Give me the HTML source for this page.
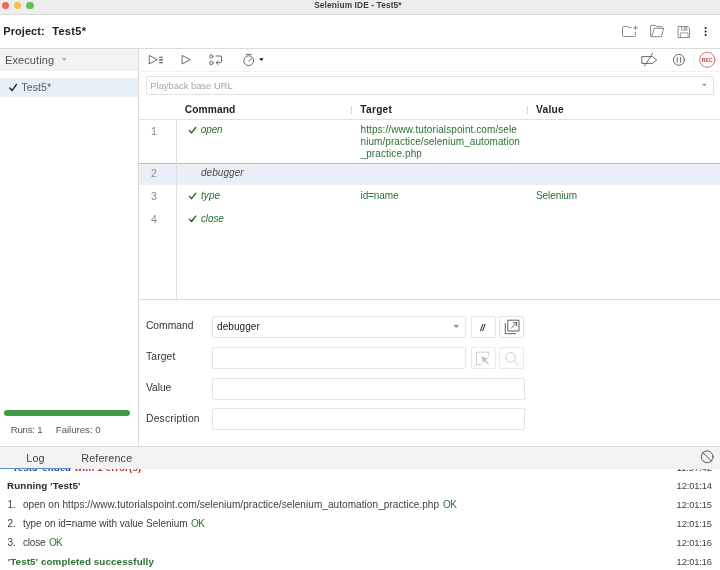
<!DOCTYPE html>
<html>
<head>
<meta charset="utf-8">
<title>Selenium IDE - Test5*</title>
<style>
*{box-sizing:border-box;margin:0;padding:0}
html,body{width:720px;height:570px;overflow:hidden;background:#fff;font-family:"Liberation Sans",sans-serif;color:#333}
.a{position:absolute}
.t{position:absolute;white-space:pre;line-height:1}
#titlebar{left:0;top:0;width:720px;height:15px;background:#eeeded;border-bottom:1px solid #dcdbdb}
.tl{position:absolute;top:1.8px;width:7.5px;height:7.5px;border-radius:50%}
#header{left:0;top:15px;width:720px;height:34px;background:#fff;border-bottom:1px solid #dcdcdc}
#left{left:0;top:49px;width:139px;height:397px;border-right:1px solid #dcdcdc;background:#fff}
#lefthead{left:0;top:49px;width:138px;height:22px;background:#f3f3f3}
#testrow{left:0;top:77.5px;width:138px;height:19.2px;background:#e7eff6}
#toolbar{left:139px;top:49px;width:581px;height:23px;border-bottom:1px solid #f0f0f0;background:#fff}
#url{left:145.7px;top:76.3px;width:568.5px;height:18.6px;border:1px solid #e0e0e0;border-radius:2px;background:#fff}
#thborder{left:139px;top:119px;width:581px;height:1px;background:#e0e0e0}
#numborder{left:176px;top:120px;width:1px;height:179px;background:#e0e0e0}
.sep{top:105.5px;width:1px;height:8px;background:#d8d8d8}
#selrow{left:139px;top:163px;width:581px;height:22px;background:#e9eff6}
#selline{left:139px;top:162.6px;width:581px;height:1px;background:#b3bfea}
#editor{left:139px;top:299px;width:581px;height:147px;border-top:1px solid #dcdcdc;background:#fff}
.inp{border:1px solid #e3e3e3;border-radius:2px;background:#fff;height:22px;left:212.3px}
.btn{border:1px solid #e3e3e3;border-radius:2px;background:#fff;height:22px;width:25px}
#progress{left:3.9px;top:410px;width:126.2px;height:6px;border-radius:3px;background:#3f9a45}
#bottombar{left:0;top:446px;width:720px;height:22.6px;background:#f3f3f3;border-top:1px solid #d8d8d8}
#tabline{left:0;top:467.6px;width:71px;height:1.6px;background:#5b8fd6}
svg{position:absolute;left:0;top:0;will-change:transform}
</style>
</head>
<body>
<div class="a" id="titlebar">
  <div class="tl" style="left:1.5px;background:#ec6a5e"></div>
  <div class="tl" style="left:13.8px;background:#f4bf4f"></div>
  <div class="tl" style="left:26.3px;background:#61c554"></div>
</div>
<div class="a" id="header"></div>
<div class="a" id="left"></div>
<div class="a" id="lefthead"></div>
<div class="a" id="testrow"></div>
<div class="a" id="toolbar"></div>
<div class="a" id="url"></div>
<div class="a" id="thborder"></div>
<div class="a" id="selrow"></div>
<div class="a" id="selline"></div>
<div class="a" id="numborder"></div>
<div class="a sep" style="left:351px"></div>
<div class="a sep" style="left:527px"></div>
<div class="a" id="editor"></div>
<div class="a inp" style="top:315.8px;width:253.7px"></div>
<div class="a inp" style="top:346.8px;width:253.7px"></div>
<div class="a inp" style="top:377.8px;width:312.3px"></div>
<div class="a inp" style="top:408.4px;width:312.3px"></div>
<div class="a btn" style="left:470.8px;top:315.8px"></div>
<div class="a btn" style="left:499.4px;top:315.8px"></div>
<div class="a btn" style="left:470.8px;top:346.8px;border-color:#eaeaea"></div>
<div class="a btn" style="left:499.4px;top:346.8px;border-color:#eaeaea"></div>
<div class="a" id="progress"></div>
<div class="a" id="bottombar"></div>
<div class="a" id="tabline"></div>
<div id="txt" style="position:absolute;left:0;top:0;width:720px;height:570px;will-change:transform">
<div class="t" style="left:314.20px;top:1.00px;font-size:8.3px;letter-spacing:0.134px;font-weight:bold;color:#3c3c3c;">Selenium IDE - Test5*</div>
<div class="t" style="left:3.30px;top:26.00px;font-size:11px;letter-spacing:0.054px;font-weight:bold;color:#222;">Project:</div>
<div class="t" style="left:52.20px;top:26.00px;font-size:11px;letter-spacing:0.316px;font-weight:bold;color:#222;">Test5*</div>
<div class="t" style="left:5.00px;top:55.00px;font-size:11px;letter-spacing:0.099px;color:#505050;">Executing</div>
<div class="t" style="left:21.30px;top:82.00px;font-size:10.6px;letter-spacing:0.091px;color:#4f6353;">Test5*</div>
<div class="t" style="left:150.30px;top:81.00px;font-size:9.4px;color:#a6a6a6;">Playback base URL</div>
<div class="t" style="left:184.70px;top:105.00px;font-size:10.2px;letter-spacing:0.141px;font-weight:bold;color:#222;">Command</div>
<div class="t" style="left:360.30px;top:105.00px;font-size:10.2px;letter-spacing:0.252px;font-weight:bold;color:#222;">Target</div>
<div class="t" style="left:536.00px;top:105.00px;font-size:10.2px;letter-spacing:0.275px;font-weight:bold;color:#222;">Value</div>
<div class="t" style="left:151.00px;top:126.00px;font-size:10.6px;color:#8a8a8a;">1</div>
<div class="t" style="left:151.00px;top:168.00px;font-size:10.6px;color:#8a8a8a;">2</div>
<div class="t" style="left:151.00px;top:191.00px;font-size:10.6px;color:#8a8a8a;">3</div>
<div class="t" style="left:151.00px;top:214.00px;font-size:10.6px;color:#8a8a8a;">4</div>
<div class="t" style="left:200.80px;top:125.00px;font-size:10px;letter-spacing:-0.138px;font-style:italic;color:#2c7031;">open</div>
<div class="t" style="left:201.00px;top:168.00px;font-size:10px;letter-spacing:0.054px;font-style:italic;color:#4a4a4a;">debugger</div>
<div class="t" style="left:201.00px;top:191.00px;font-size:10px;letter-spacing:0.073px;font-style:italic;color:#2c7031;">type</div>
<div class="t" style="left:201.00px;top:214.00px;font-size:10px;letter-spacing:-0.132px;font-style:italic;color:#2c7031;">close</div>
<div class="t" style="left:360.50px;top:125.00px;font-size:10px;letter-spacing:0.088px;color:#2c7031;">https://www.tutorialspoint.com/sele</div>
<div class="t" style="left:360.50px;top:137.00px;font-size:10px;letter-spacing:0.066px;color:#2c7031;">nium/practice/selenium_automation</div>
<div class="t" style="left:360.50px;top:149.00px;font-size:10px;letter-spacing:0.112px;color:#2c7031;">_practice.php</div>
<div class="t" style="left:360.50px;top:191.00px;font-size:10px;letter-spacing:-0.092px;color:#2c7031;">id=name</div>
<div class="t" style="left:536.00px;top:191.00px;font-size:10px;letter-spacing:-0.088px;color:#2c7031;">Selenium</div>
<div class="t" style="left:145.90px;top:321.00px;font-size:10.3px;letter-spacing:0.029px;color:#333;">Command</div>
<div class="t" style="left:146.00px;top:352.00px;font-size:10.3px;letter-spacing:0.146px;color:#333;">Target</div>
<div class="t" style="left:146.00px;top:383.00px;font-size:10.3px;letter-spacing:-0.056px;color:#333;">Value</div>
<div class="t" style="left:146.00px;top:414.00px;font-size:10.3px;letter-spacing:0.208px;color:#333;">Description</div>
<div class="t" style="left:217.10px;top:322.00px;font-size:10.1px;color:#222;">debugger</div>
<div class="t" style="left:10.70px;top:425.00px;font-size:9.6px;letter-spacing:-0.197px;color:#555;">Runs: 1</div>
<div class="t" style="left:55.80px;top:425.00px;font-size:9.6px;color:#555;">Failures: 0</div>
<div class="t" style="left:26.30px;top:453.00px;font-size:10.8px;letter-spacing:0.128px;color:#444;">Log</div>
<div class="t" style="left:81.30px;top:453.00px;font-size:10.8px;letter-spacing:0.130px;color:#444;">Reference</div>
<div class="t" style="left:7.10px;top:481.00px;font-size:9.8px;letter-spacing:0.089px;font-weight:bold;color:#2a2a2a;">Running 'Test5'</div>
<div class="t" style="left:7.40px;top:500.00px;font-size:10px;color:#404040;">1.</div>
<div class="t" style="left:22.90px;top:500.00px;font-size:10px;letter-spacing:0.074px;color:#404040;">open on https://www.tutorialspoint.com/selenium/practice/selenium_automation_practice.php</div>
<div class="t" style="left:443.10px;top:500.00px;font-size:10px;letter-spacing:-0.600px;color:#2c7031;">OK</div>
<div class="t" style="left:7.40px;top:519.00px;font-size:10px;color:#404040;">2.</div>
<div class="t" style="left:22.90px;top:519.00px;font-size:10px;letter-spacing:-0.038px;color:#404040;">type on id=name with value Selenium</div>
<div class="t" style="left:191.00px;top:519.00px;font-size:10px;letter-spacing:-0.600px;color:#2c7031;">OK</div>
<div class="t" style="left:7.40px;top:538.00px;font-size:10px;color:#404040;">3.</div>
<div class="t" style="left:22.90px;top:538.00px;font-size:10px;letter-spacing:-0.152px;color:#404040;">close</div>
<div class="t" style="left:48.90px;top:538.00px;font-size:10px;letter-spacing:-0.600px;color:#2c7031;">OK</div>
<div class="t" style="left:7.80px;top:557.00px;font-size:9.8px;letter-spacing:0.114px;font-weight:bold;color:#2c7031;">'Test5' completed successfully</div>
<div class="t" style="left:676.60px;top:482.00px;font-size:9.3px;letter-spacing:-0.113px;color:#404040;">12:01:14</div>
<div class="t" style="left:676.60px;top:501.00px;font-size:9.3px;letter-spacing:-0.113px;color:#404040;">12:01:15</div>
<div class="t" style="left:676.60px;top:520.00px;font-size:9.3px;letter-spacing:-0.113px;color:#404040;">12:01:15</div>
<div class="t" style="left:676.60px;top:539.00px;font-size:9.3px;letter-spacing:-0.113px;color:#404040;">12:01:16</div>
<div class="t" style="left:676.60px;top:558.00px;font-size:9.3px;letter-spacing:-0.113px;color:#404040;">12:01:16</div>
<div class="t" style="left:10.30px;top:463.00px;font-size:9.7px;letter-spacing:0.021px;font-weight:bold;color:#2c3a8c;clip-path:inset(6.00px -2px -6px -2px);">'Test5' ended</div>
<div class="t" style="left:74.60px;top:463.00px;font-size:9.7px;letter-spacing:0.139px;font-weight:bold;color:#c0272d;clip-path:inset(6.00px -2px -6px -2px);">with 1 error(s)</div>
<div class="t" style="left:676.60px;top:464.00px;font-size:9.3px;letter-spacing:-0.025px;color:#404040;clip-path:inset(5.00px -2px -6px -2px);">11:57:42</div>
</div>
<svg width="720" height="570" viewBox="0 0 720 570" fill="none" stroke="#5a5a5a" stroke-width="0.9" stroke-linecap="round" stroke-linejoin="round">
  <!-- dropdown arrows -->
  <path d="M61.7 58.3h5l-2.5 2.6z" fill="#a8a8a8" stroke="none"/>
  <path d="M701.8 83.8h5l-2.5 2.6z" fill="#9a9a9a" stroke="none"/>
  <path d="M453.4 325.1h5.6l-2.8 2.9z" fill="#8a8a8a" stroke="none"/>
  <path d="M259.2 58.2h4.4l-2.2 2.8z" fill="#111" stroke="none"/>
  <!-- checkmarks -->
  <path d="M9.8 88.1l2.3 2.5 4.300-6.100" stroke="#1c3820" stroke-width="1.5"/>
  <path d="M189.5 130.5l2 2.4 4.2-5.4" stroke="#1f5c25" stroke-width="1.3"/>
  <path d="M189.5 196.3l2 2.4 4.2-5.4" stroke="#1f5c25" stroke-width="1.3"/>
  <path d="M189.5 219.1l2 2.4 4.2-5.4" stroke="#1f5c25" stroke-width="1.3"/>
  <!-- play all -->
  <path d="M149.2 55.8v8.2l7.8-4.1z"/>
  <path d="M159.2 57.2h3.6M159.2 59.9h3.6M159.2 62.7h3.6" stroke="#444" stroke-width="1.1" stroke-linecap="butt"/>
  <!-- play -->
  <path d="M182.1 55.8v8.2l7.8-4.1z"/>
  <!-- step -->
  <circle cx="211.3" cy="56.3" r="1.7"/>
  <circle cx="211.3" cy="63" r="1.7"/>
  <path d="M216 56h4.5q1 0 1 1v4.7q0 1-1 1h-4.3M218.3 60.6l-2.2 2.1 2.2 2.1"/>
  <!-- timer -->
  <circle cx="248.7" cy="60.7" r="4.9"/>
  <path d="M246.2 54.4h5M248.6 61l3-2.3"/>
  <!-- new folder -->
  <path stroke="#6c6c6c" stroke-width="0.8" d="M635.400 32.200v3.300q0 1-1 1h-10.900q-1 0-1-1v-8q0-1 1-1h3.900l1.700 1h1.900M635.400 25.800v3.900M633.400 27.800h4"/>
  <!-- open folder -->
  <path stroke="#6c6c6c" stroke-width="0.8" d="M651.9 36.7h9.5l2.3-8.4h-9.6l-2.2 8.4q-1.4 0-1.400-1v-9.3q0-1 1-1h3.800l1.300 1.200h4.800q1 0 1 1v0.700"/>
  <!-- save -->
  <path stroke="#707070" stroke-width="0.8" d="M678.500 26.500h9.300l1.700 1.700v9.300h-11z"/>
  <path stroke="#808080" stroke-width="0.7" d="M681.500 26.800v3.400h5.500v-3.400M684.300 27.600h1.700v1.600h-1.700zM680.500 37.300v-4.500h7.500v4.500"/>
  <!-- kebab -->
  <circle cx="705.6" cy="28" r="0.95" fill="#111" stroke="none"/>
  <circle cx="705.6" cy="31.500" r="0.95" fill="#111" stroke="none"/>
  <circle cx="705.6" cy="35" r="0.95" fill="#111" stroke="none"/>
  <!-- disable breakpoints -->
  <path d="M642.2 56.600h10.300l4.200 3.400-4.200 3.400h-10.300zM652.700 53.300l-8.300 12.700"/>
  <!-- pause -->
  <circle cx="678.9" cy="59.800" r="5.500"/>
  <path d="M677.200 57.400v4.800M680.600 57.400v4.800"/>
  <path d="M694 51v17.700" stroke="#f0f0f0" stroke-width="1"/>
  <!-- rec -->
  <circle cx="707.300" cy="59.800" r="7.600" stroke="#bd5f5b" stroke-width="0.85"/>
  <text x="707.300" y="61.700" text-anchor="middle" font-family="Liberation Sans, sans-serif" font-size="5.200" font-weight="bold" fill="#b5413e" stroke="none">REC</text>
  <!-- comment toggle -->
  <text x="480.300" y="330.500" font-family="Liberation Sans, sans-serif" font-size="8.400" font-weight="bold" font-style="italic" fill="#111" stroke="none">//</text>
  <!-- open new window -->
  <path d="M508.200 320.200h10.800v10.800h-10.800zM505.300 323.500v10.200h10.300M511.600 327.800l5-5M513.300 322.700h3.400v3.400" stroke="#333" stroke-width="0.8"/>
  <!-- select target -->
  <path d="M489 356.500v-4.300h-12.500v12.300h4.500" stroke="#c8c8c8"/>
  <path d="M481.400 356.300l6.600 2.300-2.500 1.400 3.500 3.800-1 1-3.500-3.800-1.300 2.400z" fill="#c4c4c4" stroke="none"/>
  <!-- search -->
  <circle cx="510.700" cy="357.300" r="4.800" stroke="#c8c8c8"/>
  <path d="M514.200 360.800l3.800 3.700" stroke="#c8c8c8"/>
  <!-- clear log -->
  <circle cx="707.200" cy="456.800" r="5.900" stroke="#4a4a4a"/>
  <path d="M703 452.700l8.300 8.300" stroke="#4a4a4a"/>
</svg>
</body>
</html>
